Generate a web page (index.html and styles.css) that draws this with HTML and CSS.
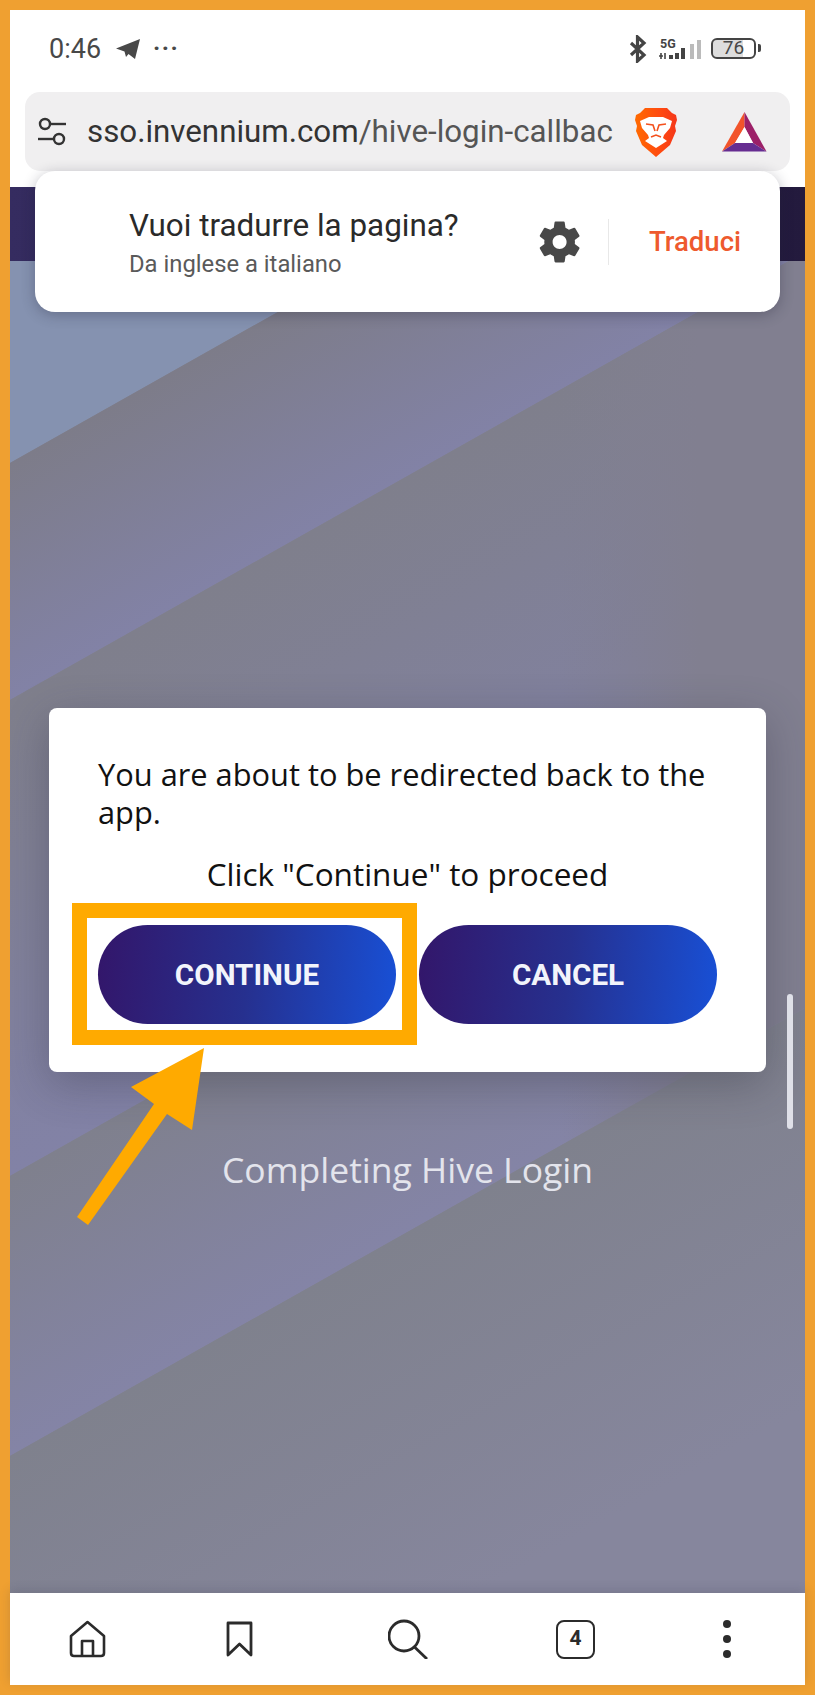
FILE: index.html
```html
<!DOCTYPE html>
<html>
  <head>
    <meta charset="utf-8">
    <title>Completing Hive Login</title>
    <link rel="stylesheet" href="styles.css">
  </head>
  <body>
    <div class="phone">
      <div class="status">
        <span class="time">0:46</span>
        <svg class="tg" width="26" height="22" viewBox="115 38 26 22"><path d="M115 48.5 L139 39 L134 59 L127.5 54 L125 57 L123.5 51.5 Z" fill="#484848"/></svg>
        <span class="more">···</span>
        <div class="status-right">
          <svg width="18" height="28" viewBox="0 0 18 28"><path d="M2 8 L15 20 L8.5 26 V2 L15 8 L2 20" fill="none" stroke="#444" stroke-width="3.2"/></svg>
          <svg class="signal" width="44" height="24" viewBox="658 36 44 24">
            <text x="660" y="46.5" class="five-g">5G</text>
            <path d="M661 52 V58 M659 55 H663 M665 52 V58" stroke="#444" stroke-width="1.6" fill="none"/>
            <rect x="669" y="54" width="4" height="4" fill="#444"/>
            <rect x="675" y="52" width="4" height="6" fill="#444"/>
            <rect x="681" y="47" width="4" height="11" fill="#444"/>
            <rect x="690" y="43" width="4" height="15" fill="#bbb"/>
            <rect x="697" y="39" width="4" height="19" fill="#bbb"/>
          </svg>
          <div class="battery">76</div>
        </div>
      </div>

      <div class="url-wrap">
        <div class="url-bar">
          <svg width="32" height="30" viewBox="0 0 32 30"><g fill="none" stroke="#333" stroke-width="2.4"><circle cx="9" cy="7" r="5"/><path d="M14 7 H30"/><circle cx="23" cy="22" r="5"/><path d="M2 22 H18"/></g></svg>
          <div class="url"><span class="host">sso.invennium.com</span>/hive-login-callbac</div>
          <svg class="brave" width="42" height="50" viewBox="0 0 42 50">
            <defs><linearGradient id="lion" x1="0" x2="1" y1="0" y2="0"><stop offset="0" stop-color="#ff6a00"/><stop offset="0.6" stop-color="#ff4a10"/><stop offset="1" stop-color="#f4361a"/></linearGradient></defs>
            <path d="M10 1 H32 L37 6 L41 8 L42 13 L40 19 L41 24 L35 38 L21 50 L7 38 L1 24 L2 19 L0 13 L1 8 L5 6 Z" fill="url(#lion)"/>
            <path d="M5 14 L14 10 H28 L37 14 L35 21 L29 28 L28 31 L32 34 L21 41 L10 34 L14 31 L13 28 L7 21 Z" fill="#fff"/>
            <path d="M11 17 L18 18 L20 24 M31 17 L24 18 L22 24 M16 30 L21 28 L26 30" fill="none" stroke="#f4511e" stroke-width="1.6"/>
          </svg>
          <svg class="bat" width="45" height="40" viewBox="722 112 45 40">
            <path d="M744.5 112 L744.5 127 L735 143 L722 151.5 Z" fill="#f2542b"/>
            <path d="M744.5 112 L766.5 151.5 L753 143 L744.5 127 Z" fill="#9c2068"/>
            <path d="M722 151.5 L735 143 H753 L766.5 151.5 Z" fill="#662d91"/>
            <path d="M744.5 127 L753 143 H735 Z" fill="#fff"/>
          </svg>
        </div>
      </div>

      <div class="page">
        <svg class="page-bg" viewBox="10 187 795 1406" preserveAspectRatio="none">
          <defs>
            <linearGradient id="b1" gradientUnits="userSpaceOnUse" x1="10" y1="463" x2="111" y2="643"><stop offset="0" stop-color="#7d7c89"/><stop offset="1" stop-color="#8282a6"/></linearGradient>
            <linearGradient id="b2" gradientUnits="userSpaceOnUse" x1="10" y1="700" x2="214" y2="1061"><stop offset="0" stop-color="#7f7f8c"/><stop offset="1" stop-color="#8282a6"/></linearGradient>
            <linearGradient id="b3" gradientUnits="userSpaceOnUse" x1="10" y1="1176" x2="130" y2="1388"><stop offset="0" stop-color="#7f808d"/><stop offset="1" stop-color="#8484a6"/></linearGradient>
            <linearGradient id="b4" gradientUnits="userSpaceOnUse" x1="10" y1="1456" x2="181" y2="1760"><stop offset="0" stop-color="#7f818d"/><stop offset="1" stop-color="#86869d"/></linearGradient>
            <linearGradient id="fade" gradientUnits="userSpaceOnUse" x1="560" y1="0" x2="700" y2="0"><stop offset="0" stop-color="#817f90" stop-opacity="0"/><stop offset="1" stop-color="#817f90"/></linearGradient>
          </defs>
          <polygon points="10,187 805,187 805,15 10,463" fill="#8592b0"/>
          <polygon points="10,463 805,15 805,252 10,700" fill="url(#b1)"/>
          <polygon points="10,700 805,252 805,728 10,1176" fill="url(#b2)"/>
          <polygon points="10,1176 805,728 805,1008 10,1456" fill="url(#b3)"/>
          <polygon points="10,1456 805,1008 805,1593 10,1593" fill="url(#b4)"/>
          <polygon points="560,390 805,252 805,1008 560,1146" fill="url(#fade)"/>
        </svg>
        <div class="page-header"></div>
        <div class="modal">
          <p class="modal-text">You are about to be redirected back to the app.</p>
          <p class="modal-hint">Click "Continue" to proceed</p>
          <div class="modal-btns">
            <a class="btn">CONTINUE</a>
            <a class="btn">CANCEL</a>
          </div>
        </div>
        <p class="loading">Completing Hive Login</p>
      </div>

      <div class="nav">
        <svg width="40" height="40" viewBox="67 1621 40 40"><g fill="none" stroke="#2b2b2b" stroke-width="2.6" stroke-linejoin="round"><path d="M87.5 1624 L71 1638 V1655 Q71 1658 74 1658 H101 Q104 1658 104 1655 V1638 Z"/><path d="M82 1658 V1643 H93 V1658"/></g></svg>
        <svg width="40" height="40" viewBox="220 1621 40 40"><path d="M228 1625 H251 V1657 L239.5 1646 L228 1657 Z" fill="none" stroke="#2b2b2b" stroke-width="2.8" stroke-linejoin="round"/></svg>
        <svg width="40" height="40" viewBox="388 1621 40 40"><g fill="none" stroke="#2b2b2b" stroke-width="2.8"><circle cx="404" cy="1638" r="15"/><path d="M414.5 1649 L427 1661"/></g></svg>
        <div class="tabs">4</div>
        <div class="dots"><i></i><i></i><i></i></div>
      </div>

      <div class="translate">
        <div class="translate-text">
          <div class="translate-title">Vuoi tradurre la pagina?</div>
          <div class="translate-sub">Da inglese a italiano</div>
        </div>
        <svg class="gear" width="48" height="48" viewBox="0 0 24 24"><path fill="#484848" d="M19.4 13c.04-.32.06-.66.06-1s-.02-.68-.07-1l2.16-1.68c.2-.15.25-.42.12-.64l-2.05-3.55c-.12-.22-.38-.3-.6-.22l-2.55 1.02c-.53-.4-1.1-.74-1.73-1l-.38-2.7c-.04-.25-.25-.43-.5-.43h-4.1c-.25 0-.46.18-.5.43l-.38 2.7c-.62.26-1.2.6-1.73 1L4.6 4.91c-.23-.08-.48 0-.6.22L1.95 8.68c-.13.22-.07.49.12.64L4.23 11c-.05.32-.08.66-.08 1s.03.68.08 1l-2.16 1.68c-.2.15-.25.42-.12.64l2.05 3.55c.12.22.38.3.6.22l2.55-1.02c.53.4 1.1.74 1.73 1l.38 2.7c.04.25.25.43.5.43h4.1c.25 0 .46-.18.5-.43l.38-2.7c.62-.26 1.2-.6 1.73-1l2.55 1.02c.23.08.48 0 .6-.22l2.05-3.55c.13-.22.07-.49-.12-.64L19.4 13zM11.8 15.5c-1.93 0-3.5-1.57-3.5-3.5s1.57-3.5 3.5-3.5 3.5 1.57 3.5 3.5-1.57 3.5-3.5 3.5z"/></svg>
        <div class="translate-line"></div>
        <a class="translate-btn">Traduci</a>
      </div>

      <div class="scroll-thumb"></div>
      <div class="mark"></div>
      <svg class="arrow" width="127" height="177" viewBox="77 1048 127 177"><polygon points="204,1048 131,1087 154,1104 77,1217 88,1225 167,1114 192,1130" fill="#ffaa00"/></svg>
    </div>
  </body>
</html>
```

FILE: styles.css
```css
* {margin: 0;padding: 0;box-sizing: border-box;}
html, body {width: 815px;height: 1695px;overflow: hidden;}
body {font-family: "Roboto", "Liberation Sans", sans-serif;background: #fff;}

.phone {
  position: relative;
  display: flex;
  flex-direction: column;
  width: 815px;
  height: 1695px;
  border: 10px solid #efa031;
  background: #fff;
}

/* status bar */
.status {display: flex;align-items: center;height: 82px;padding: 0 45px 5px 39px;flex: none;}
.time {font-size: 27px;color: #484848;}
.tg {margin-left: 15px;}
.more {margin-left: 11px;font-size: 24px;font-weight: 700;color: #484848;letter-spacing: 1.5px;position: relative;top: -1px;}
.status-right {display: flex;align-items: center;margin-left: auto;gap: 11px;}
.five-g {font-family: "Roboto", sans-serif;font-size: 12.5px;font-weight: 700;fill: #444;}
.battery {
  position: relative;
  width: 45px;
  height: 21px;
  margin: 0 4px 0 -2px;
  border: 2.5px solid #444;
  border-radius: 6px;
  font-size: 19px;
  line-height: 16px;
  text-align: center;
  color: #484848;
  background: linear-gradient(90deg, #ddd 0, #ddd 74%, #fff 74%);
  background-clip: padding-box;
}
.battery:after {
  content: "";
  position: absolute;
  right: -7px;
  top: 4px;
  width: 3px;
  height: 8px;
  background: #444;
  border-radius: 0 2px 2px 0;
}

/* url bar */
.url-wrap {height: 95px;padding: 0 15px;flex: none;}
.url-bar {
  display: flex;
  align-items: center;
  height: 79px;
  padding: 0 23px 0 11px;
  background: #f0eff0;
  border-radius: 15px;
}
.url {
  width: 530px;
  margin-left: 19px;
  overflow: hidden;
  white-space: nowrap;
  font-size: 31.3px;
  color: #555;
}
.host {color: #333;}
.brave {margin-left: 18px;}
.bat {margin-left: 45px;}

/* page */
.page {position: relative;flex: 1;overflow: hidden;background: #80808e;}
.page-bg {position: absolute;left: 0;top: 0;width: 100%;height: 100%;}
.page-header {
  position: absolute;
  left: 0;
  top: 0;
  width: 100%;
  height: 74px;
  background: linear-gradient(90deg, #352c60, #231a3d);
}
.modal {
  position: relative;
  height: 364px;
  margin: 521px 39px 0;
  padding: 47px 49px 0;
  background: #fff;
  border-radius: 8px;
  box-shadow: 0 12px 44px rgba(40, 40, 60, .32);
  font-family: "Open Sans", sans-serif;
  color: #111;
}
.modal-text {font-size: 30.8px;line-height: 38px;}
.modal-hint {margin-top: 24px;font-size: 31.5px;line-height: 38px;text-align: center;}
.modal-btns {display: flex;gap: 23px;margin-top: 32px;}
.btn {
  display: flex;
  align-items: center;
  justify-content: center;
  width: 298px;
  height: 99px;
  border-radius: 50px;
  background: linear-gradient(95deg, #33166a, #26308f 50%, #1850d6);
  font-family: "Roboto", sans-serif;
  font-size: 29.6px;
  font-weight: 700;
  color: #f2f4fb;
}
.loading {
  position: relative;
  margin-top: 73px;
  font-family: "Open Sans", sans-serif;
  font-size: 35.5px;
  line-height: 48px;
  text-align: center;
  color: #e3e4ec;
}

/* bottom nav */
.nav {
  position: relative;
  display: grid;
  grid-template-columns: 153px 168px 167px 152px 40px;
  align-items: center;
  height: 92px;
  padding-left: 57px;
  flex: none;
  background: #fff;
  box-shadow: 0 -3px 10px rgba(50, 50, 70, .18);
}
.tabs {
  width: 39px;
  height: 39px;
  margin-left: 1px;
  border: 2.8px solid #2b2b2b;
  border-radius: 8px;
  font-size: 21px;
  font-weight: 700;
  line-height: 33px;
  text-align: center;
  color: #2b2b2b;
}
.dots {display: flex;flex-direction: column;align-items: center;gap: 7px;width: 40px;}
.dots i {width: 8px;height: 8px;border-radius: 50%;background: #2b2b2b;}

/* things lying over the page */
.translate {
  position: absolute;
  left: 25px;
  top: 161px;
  display: flex;
  align-items: center;
  width: 745px;
  height: 141px;
  padding: 0 39px 0 94px;
  background: #fff;
  border-radius: 20px;
  box-shadow: 0 3px 14px rgba(30, 30, 50, .3);
}
.translate-title {font-size: 31.4px;line-height: 38px;color: #2a2a2a;}
.translate-sub {margin-top: 6px;font-size: 23.8px;line-height: 26px;color: #5a5a5a;}
.gear {margin-left: auto;}
.translate-line {width: 1px;height: 46px;margin: 0 40px 0 24px;background: #e8e8e8;}
.translate-btn {font-size: 27.5px;font-weight: 500;color: #ee5a2e;}
.scroll-thumb {
  position: absolute;
  left: 777px;
  top: 984px;
  width: 6px;
  height: 135px;
  background: #dfe0e8;
  border-radius: 3px;
}
.mark {
  position: absolute;
  left: 62px;
  top: 893px;
  width: 345px;
  height: 142px;
  border: 15px solid #ffaa00;
}
.arrow {position: absolute;left: 67px;top: 1038px;}
```
